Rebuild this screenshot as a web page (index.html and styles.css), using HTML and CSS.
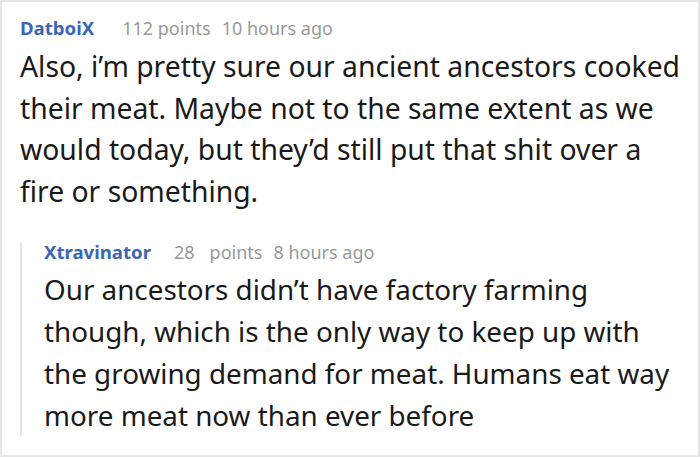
FILE: index.html
```html
<!DOCTYPE html>
<html>
<head>
<meta charset="utf-8">
<link rel="stylesheet" href="styles.css">
</head>
<body>
<div class="frame">
  <div class="comment">
    <div class="meta">
      <span class="user">DatboiX</span>
      <span class="score">112 points</span>
      <span class="time">10 hours ago</span>
    </div>
    <p class="text">Also, i’m pretty sure our ancient ancestors cooked their meat. Maybe not to the same extent as we would today, but they’d still put that shit over a fire or something.</p>
    <div class="reply">
      <div class="meta meta-reply">
        <span class="user">Xtravinator</span>
        <span class="score"><span class="num">28</span>points</span>
        <span class="time">8 hours ago</span>
      </div>
      <p class="text text-reply">Our ancestors didn’t have factory farming though, which is the only way to keep up with the growing demand for meat. Humans eat way more meat now than ever before</p>
    </div>
  </div>
</div>
</body>
</html>
```
FILE: styles.css
```css
html, body {
  margin: 0;
  padding: 0;
  background: #fff;
}
.frame {
  width: 700px;
  height: 457px;
  box-sizing: border-box;
  border: 2px solid #e6e6e6;
  font-family: "Noto Sans", "Open Sans", sans-serif;
  overflow: hidden;
}
.comment {
  padding: 13px 14px 0 18px;
}
.meta {
  display: flex;
  align-items: baseline;
  font-size: 18px;
  line-height: 26px;
  color: #999;
}
.user {
  color: #3a66b5;
  font-weight: 700;
  font-size: 18.6px;
  margin-right: 28px;
}
.score {
  margin-right: 11px;
}
.num {
  margin-right: 15px;
}
.text {
  margin: 5px 0 0;
  font-size: 28.3px;
  line-height: 41.5px;
  color: #1a1a1a;
}
.reply {
  margin-top: 31px;
  margin-right: 6px;
  border-left: 2px solid #e3e3e3;
  padding-left: 22px;
}
.meta-reply {
  line-height: 18px;
}
.meta-reply .user {
  margin-right: 23px;
}
.meta-reply .score {
  margin-right: 11px;
}
.text-reply {
  margin: 7px 0 -10px;
  font-size: 27.8px;
  line-height: 42px;
}
```
